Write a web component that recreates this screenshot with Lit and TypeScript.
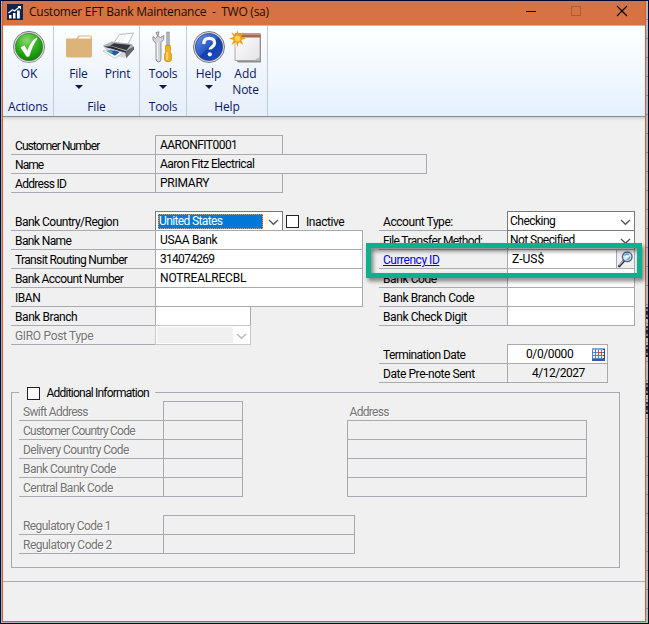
import { LitElement, html, css, svg, nothing } from "lit";
import { customElement } from "lit/decorators.js";

const text = (value: string, width: number, cls = "") =>
  html`<span class="t ${cls}" data-w=${width}>${value}</span>`;

type Row = {
  label: string;
  lw: number;
  value?: string;
  vw?: number;
  width: number;
  kind?: string;
  tail?: unknown;
  dim?: boolean;
  link?: boolean;
};

const chevron = html`<svg class="chev" width="11" height="7" viewBox="0 0 11 7"><path d="M1 1 5.5 5.3 10 1" fill="none" stroke="currentColor" stroke-width="1.2"/></svg>`;

const lens = html`<span class="lens"><svg width="17" height="18" viewBox="0 0 17 18">
  <path d="M2.300 16 6.800 10.800" stroke="#262b35" stroke-width="2.6" stroke-linecap="round"/>
  <path d="M2.200 15.300 6.300 10.600" stroke="#b9c3d0" stroke-width="1.100"/>
  <circle cx="10.200" cy="6.800" r="4.800" fill="#cfe9fb" stroke="#53647c" stroke-width="1.4"/>
  <path d="M7.500 5.600q2-2.600 4.400-1M9.500 9.600q3 0 3.300-3" stroke="#5aa4dc" fill="none" stroke-width="1.3"/>
  <path d="M8.500 6.600h2.400" stroke="#fff" stroke-width="1.6"/></svg></span>`;

const calendar = html`<svg class="cal" width="13" height="13" viewBox="0 0 13 13" shape-rendering="crispEdges">
  <rect width="13" height="13" fill="#5f80c4"/><rect width="13" height="2" fill="#7fa6de"/>
  <rect x="11" y="1" width="2" height="12" fill="#2e4a9a"/><rect y="11" width="13" height="2" fill="#3c58a6"/>
  ${[1, 4, 7, 10].map((x) => [2, 5, 8].map((y) => svg`<rect x=${x} y=${y} width="2" height="2" fill="#f1f6fe"/>`))}
  <rect x="6" y="4" width="4" height="4" fill="#e2481c"/><rect x="7" y="5" width="2" height="2" fill="#fff"/></svg>`;

const okIcon = html`<svg width="34" height="34" viewBox="0 0 34 34">
  <defs><radialGradient id="g" cx=".42" cy=".25" r=".85"><stop offset="0" stop-color="#8ad96b"/><stop offset=".5" stop-color="#2fae1c"/><stop offset="1" stop-color="#0a7307"/></radialGradient>
  <linearGradient id="r" x2="0" y2="1"><stop stop-color="#777"/><stop offset="1" stop-color="#9a9a9a"/></linearGradient></defs>
  <circle cx="17" cy="17" r="15.6" fill="#dcdcdc" stroke="url(#r)" stroke-width="1"/>
  <circle cx="17" cy="17" r="13.7" fill="url(#g)" stroke="#247a1c" stroke-width=".6"/>
  <path d="M8.6 17.4 12.4 15.2 15.4 20.6 C17.4 15 20.2 10.2 24.4 7.6 L25.6 8.4 C22 13 19.2 19.4 17.2 26.4 L14.6 26.8Z" fill="#fff"/></svg>`;

const folderIcon = html`<svg width="28" height="34" viewBox="0 0 28 34">
  <path d="M1 8.5h10.5l2-3H25q2 0 2 2V26q0 1.4-1.5 1.4h-23Q1 27.4 1 26Z" fill="#dcb479"/>
  <path d="M13 8.6 14.4 6.6H25.6V8.6Z" fill="#fff"/></svg>`;

const printIcon = html`<svg width="34" height="34" viewBox="0 0 34 34">
  <path d="M12 14 18.5 4.5 32.5 3 27 14Z" fill="#fdfdfe" stroke="#a5a9b0" stroke-width=".8"/>
  <path d="M17 12l4.5-6M20 12l4.5-6.500" stroke="#e3e6ea" stroke-width=".8"/>
  <path d="M2 15.5 11 11.500 31 14 33 18 25 26.500 8 23Z" fill="#aeb3b8"/>
  <path d="M9 15.600 13 13.300 29.500 15 25.500 20.200Z" fill="#34383d"/>
  <path d="M3 16.600 10 16.200 25 21.200 24.500 23.500Z" fill="#24282c"/>
  <path d="M25 21 33 16.400V19.500L25 28.500Z" fill="#62676d"/>
  <path d="M2 17 24 22.500V28L19 27Z" fill="#d6dadd"/>
  <path d="M2 21 9 18.500 22 22.500 14 28.500Z" fill="#f5f8fb" stroke="#9aa2ac" stroke-width=".5"/>
  <path d="M5 21 9.500 19.400 18.500 22 14 25.500Z" fill="#3f8ee0"/>
  <path d="M9 22.600 13.500 20.600 18.500 22 14 25.500Z" fill="#1d5a9f"/><path d="M7 21.500l3-.5 2 2-2 .6Z" fill="#64b45a"/></svg>`;

const toolsIcon = html`<svg width="22" height="34" viewBox="0 0 22 34">
  <path d="M4 2.500 7 1.800 6 6 8.500 7.500 11.800 5.500Q12.800 10 9 12.500V28.500Q9 32 6.500 32T4 28.500V13Q0 11 1 6.500L3.600 8.500 5.500 6Z" fill="#d3d5d8" stroke="#777b81" stroke-width=".8"/>
  <path d="M5.300 13V29" stroke="#fff" stroke-width="1"/>
  <path d="M14.700 2h2.600V15h-2.600Z" fill="#b4b8bd" stroke="#777" stroke-width=".5"/>
  <path d="M13.800 15.500h4.400l.4 4-.4 2 1.200 3V29.500q0 2.200-3.400 2.200t-3.400-2.200V24.500l1.200-3-.4-2Z" fill="#f4b21d" stroke="#bd7b0b" stroke-width=".7"/>
  <path d="M15 22V30" stroke="#ffe68a" stroke-width="1.300"/></svg>`;

const helpIcon = html`<svg width="34" height="34" viewBox="0 0 34 34">
  <defs><linearGradient id="b" x2="1" y2="1"><stop stop-color="#6f97ea"/><stop offset=".48" stop-color="#2a59c6"/><stop offset=".52" stop-color="#1441ae"/><stop offset="1" stop-color="#1c4cc0"/></linearGradient></defs>
  <circle cx="17" cy="17" r="15.500" fill="#dcdcdc" stroke="#7b7b7b" stroke-width="1"/>
  <circle cx="17" cy="17" r="13.600" fill="url(#b)" stroke="#173b91" stroke-width=".7"/>
  <path d="M11.800 14Q11.700 8.300 17.200 8.300T22.600 13Q22.600 15 20.300 16.700T18.200 19.600" fill="none" stroke="#f7f9fd" stroke-width="3.200"/>
  <circle cx="17.800" cy="24.300" r="2.100" fill="#f7f9fd"/></svg>`;

const noteIcon = html`<svg width="34" height="34" viewBox="0 0 34 34">
  <defs><linearGradient id="n" x2="1" y2="1"><stop stop-color="#fff"/><stop offset="1" stop-color="#e3e3e6"/></linearGradient></defs>
  <path d="M7 4.500H32V32.500H9L7 30Z" fill="#8d8d8d"/>
  <path d="M6 4H31V30.500H6Z" fill="url(#n)" stroke="#9a9a9a" stroke-width=".8"/>
  <path d="M6 3.500H31.400V7.500H6Z" fill="#a5694f"/><path d="M6 3.500H31.400V5H6Z" fill="#c39482"/>
  <path d="M25 30.500 31 27V30.500Z" fill="#b9b9b9"/>
  <path d="M8.500 0 10 5.200 14.300 2.200 12.300 7 17 8.500 12.300 10 14.300 15 10 11.900 8.500 17 7 11.900 2.500 15 4.700 10 0 8.500 4.700 7 2.500 2.200 7 5.200Z" fill="#f39a12"/>
  <circle cx="8.500" cy="8.500" r="3" fill="#ffd34d"/></svg>`;

const sheet = css`
  :host { display: block; width: 649px; height: 624px; box-sizing: border-box; overflow: hidden; position: relative;
    font-family: Roboto, "Liberation Sans", sans-serif; font-size: 12px; color: #000;
    background: #adb0b6; border: 1px solid #05072c; }
  * { box-sizing: border-box; }
  svg { display: block; flex: none; }
  .t { display: inline-block; white-space: pre; flex: none; }
  .frame { display: flex; }
  .win { width: 644px; height: 621px; margin-left: 1px; border: 1px solid #d2602c; border-top: 0; background: #f0f0f0; flex: none; }
  .edge { width: 2px; height: 621px; background:
    repeating-linear-gradient(#b6b7bb 0 18px, #85878e 18px 19px); }
  .edge i { display: block; width: 2px; height: 12px; background: repeating-linear-gradient(#30343c 0 2px, #7d8590 2px 4px, #20242c 4px 6px); margin-top: 7px; }
  .edge i:first-child { margin-top: 306px; }
  .edge i:nth-child(4) { margin-top: 26px; }
  .title { height: 24px; background: #d77342; display: flex; align-items: center; padding-left: 4px; color: #170d08;
    font: 12px/24px "Open Sans", "Noto Sans", sans-serif; }
  .title .t { margin-left: 6px; margin-top: -2px; }
  .title .app { margin-top: -3px; }
  .ctl { margin-left: auto; margin-top: -4px; }
  .ribbon { height: 92px; border-top: 1px solid #bcbcbc; border-bottom: 1px solid #898b90; display: flex;
    background: linear-gradient(#fff, #f2f9ff 50%, #e3f1fe);
    color: #0b1560; font: 12px/15px "Open Sans", "Noto Sans", sans-serif; }
  .shade { height: 4px; background: linear-gradient(#d4d4d6, #f0f0f0); }
  .group { border-right: 1px solid #c3cbd6; display: flex; flex-direction: column; align-items: center;
    background: linear-gradient(#fdfeff, #eff5fc 50%, #e6effa); }
  .btns { display: flex; height: 73px; padding-top: 4px; }
  .btn { display: flex; flex-direction: column; align-items: center; }
  .btn .t { margin-top: 2px; }
  .btn .t + .t { margin-top: 0.5px; }
  .drop { border: 4px solid transparent; border-top-color: #0b1560; border-bottom: 0; margin-top: 4px; }
  .w51 { width: 51px; } .w86 { width: 86px; } .w47 { width: 47px; } .w81 { width: 81px; }
  .w51 .btns { padding-left: 2px; }
  .w86 .btns { padding-left: 4px; }
  .w81 .btns { padding-left: 1px; }
  .w38 { width: 38px; } .w40 { width: 40px; } .w36 { width: 36px; }
  .body { height: 461px; padding: 14px 0 0 8px; border-bottom: 1px solid #a9aaaf; }
  .cols { display: flex; align-items: flex-start; margin-top: 18px; height: 172px; }
  .left { width: 368px; }
  .rows { padding-top: 1px; }
  .row { display: flex; height: 19px; position: relative; }
  .lab { border-bottom: 1px solid #a9aaaf; width: 144px; padding-left: 4px; line-height: 14px; padding-top: 3px; height: 19px; flex: none; white-space: nowrap; }
  .right .lab { width: 128px; }
  .val { height: 20px; margin-top: -1px; border: 1px solid #a9aaaf; padding-left: 4px; padding-top: 2px; line-height: 15px;
    display: flex; align-items: flex-start; flex: none; }
  .white { background: #fff; }
  .combo { background: #fff; border-color: #7a7a7d; position: relative; padding-left: 2px; }
  .chev { margin: 5px 3px 0 auto; color: #505050; }
  .combo.sel { padding: 2px 0 0 2px; }
  .pick { background: #0078d7; color: #fff; width: 105px; height: 15px; border: 1px dotted #f39b4a; line-height: 13px; }
  .off { border-color: #c8c8cb; padding: 1px 0 0 1px; }
  .off .blank { width: 76px; height: 16px; background: #f0f0f0; }
  .off .chev { color: #b5b5b5; margin-right: 3px; margin-top: 6px; }
  .dim { color: #737373; text-shadow: 1px 1px 0 #fff; }
  .link { color: #0000f0; text-decoration: underline; }
  .chk { width: 13px; height: 13px; border: 1px solid #222; background: #fff; flex: none; }
  .side { display: flex; padding-left: 3px; line-height: 14px; }
  .side .chk { margin-top: 3px; }
  .side .t { margin: 3px 0 0 7px; }
  .lens { margin: -2px 0 0 auto; border-left: 1px solid #a9aaaf; height: 18px; width: 18px; background: #f0f0f0; }
  .date { padding-left: 18px; }
  .cal { margin: 1px 2px 0 auto; }
  .sent { padding-left: 24px; }
  .gap { height: 18px; }
  .info { width: 609px; height: 176px; border: 1px solid #a9aaaf; position: relative; margin-top: 9px; padding: 8px 0 0 7px; }
  .legend { position: absolute; left: 7px; top: -9px; height: 18px; width: 136px; background: #f0f0f0; display: flex; align-items: center; padding-left: 8px; line-height: 18px; }
  .legend .t { margin-left: 6.5px; }
  .pair { display: flex; }
  .addr { margin-left: 104px; }
  .addr .cap { height: 19px; padding: 4px 0 0 2.5px; line-height: 14px; }
  .line { width: 240px; height: 20px; border: 1px solid #a9aaaf; margin-bottom: -1px; }
  .mark { position: absolute; left: 365px; top: 242px; width: 276px; height: 35px; border: 5px solid #0daf8d;
    filter: drop-shadow(2px 3px 2px rgba(0,0,0,.5)); }
`;

@customElement("app-root")
export class AppRoot extends LitElement {
  static styles = sheet;

  firstUpdated() {
    this.renderRoot.querySelectorAll<HTMLElement>("[data-w]").forEach((el) => {
      const n = (el.textContent ?? "").length;
      const gap = (Number(el.dataset.w) + 0.3 - el.getBoundingClientRect().width) / n;
      el.style.letterSpacing = `${gap.toFixed(3)}px`;
    });
  }

  row(r: Row) {
    const content =
      r.kind === "combo sel"
        ? html`<span class="pick">${text(r.value!, r.vw!)}</span>${chevron}`
        : r.kind === "combo off"
          ? html`<span class="blank"></span>${chevron}`
          : html`${r.value ? text(r.value, r.vw!) : nothing}${r.kind === "combo" ? chevron : nothing}${r.kind === "white look" ? lens : nothing}${r.kind === "white date" ? calendar : nothing}`;
    return html`<div class="row">
      <div class="lab">${text(r.label, r.lw, r.dim ? "dim" : r.link ? "link" : "")}</div>
      <div class="val ${r.kind ?? ""}" style="width:${r.width}px">${content}</div>${r.tail ?? nothing}
    </div>`;
  }

  rows(list: Row[]) {
    return html`<div class="rows">${list.map((r) => this.row(r))}</div>`;
  }

  render() {
    const drop = html`<i class="drop"></i>`;
    return html`<div class="frame"><div class="win">
        <div class="title">
          <svg class="app" width="16" height="16" viewBox="0 0 16 16"><rect width="16" height="16" fill="#0d2752"/>
            <path d="M2 11h2.500v3.500H2ZM6 9h2.500v5.500H6ZM10 6.500h2.800V14.500H10Z" fill="#fff"/><path d="M1.500 9 5.500 5.800 7.500 7 13 2.500" fill="none" stroke="#fff" stroke-width="1.200"/><path d="M10.500 2H14V5.500Z" fill="#fff"/></svg>
          ${text("Customer EFT Bank Maintenance  -  TWO (sa)", 239.5)}
          <svg class="ctl" width="119" height="12" viewBox="0 0 119 12" fill="none">
            <path d="M0 6.500H10" stroke="#000"/><rect x="45.500" y="1.500" width="9" height="9" stroke="#ae5a32"/>
            <path d="M91 1 101 11M101 1 91 11" stroke="#000" stroke-width="1.200"/></svg>
        </div>
        <div class="ribbon">
          <div class="group w51"><div class="btns"><div class="btn">${okIcon}${text("OK", 16)}</div></div>${text("Actions", 39.5)}</div>
          <div class="group w86"><div class="btns"><div class="btn w38">${folderIcon}${text("File", 18)}${drop}</div><div class="btn w40">${printIcon}${text("Print", 25)}</div></div>${text("File", 18)}</div>
          <div class="group w47"><div class="btns"><div class="btn">${toolsIcon}${text("Tools", 28)}${drop}</div></div>${text("Tools", 28)}</div>
          <div class="group w81"><div class="btns"><div class="btn w36">${helpIcon}${text("Help", 25)}${drop}</div><div class="btn w38">${noteIcon}${text("Add", 22)}${text("Note", 26)}</div></div>${text("Help", 25)}</div>
        </div>
        <div class="shade"></div>
        <div class="body">
          ${this.rows([
            { label: "Customer Number", lw: 84, value: "AARONFIT0001", vw: 77, width: 128 },
            { label: "Name", lw: 28, value: "Aaron Fitz Electrical", vw: 94, width: 272 },
            { label: "Address ID", lw: 51, value: "PRIMARY", vw: 49, width: 128 },
          ])}
          <div class="cols">
            <div class="left">${this.rows([
              { label: "Bank Country/Region", lw: 103, value: "United States", vw: 63, width: 128, kind: "combo sel",
                tail: html`<div class="side"><i class="chk"></i>${text("Inactive", 38)}</div>` },
              { label: "Bank Name", lw: 56, value: "USAA Bank", vw: 57, width: 208, kind: "white" },
              { label: "Transit Routing Number", lw: 112, value: "314074269", vw: 54, width: 208, kind: "white" },
              { label: "Bank Account Number", lw: 108, value: "NOTREALRECBL", vw: 86, width: 208, kind: "white" },
              { label: "IBAN", lw: 25, width: 208, kind: "white" },
              { label: "Bank Branch", lw: 62, width: 96, kind: "white" },
              { label: "GIRO Post Type", lw: 78, width: 96, kind: "combo off", dim: true },
            ])}</div>
            <div class="right">${this.rows([
              { label: "Account Type:", lw: 69.5, value: "Checking", vw: 45, width: 128, kind: "combo" },
              { label: "File Transfer Method:", lw: 99, value: "Not Specified", vw: 64, width: 128, kind: "combo" },
              { label: "Currency ID", lw: 56, value: "Z-US$", vw: 32, width: 128, kind: "white look", link: true },
              { label: "Bank Code", lw: 53.5, width: 128, kind: "white" },
              { label: "Bank Branch Code", lw: 91, width: 128, kind: "white" },
              { label: "Bank Check Digit", lw: 83.5, width: 128, kind: "white" },
            ])}<div class="gap"></div>${this.rows([
              { label: "Termination Date", lw: 82, value: "0/0/0000", vw: 47, width: 101, kind: "white date" },
              { label: "Date Pre-note Sent", lw: 91.5, value: "4/12/2027", vw: 52.5, width: 101, kind: "sent" },
            ])}</div>
          </div>
          <div class="info">
            <div class="legend"><i class="chk"></i>${text("Additional Information", 102)}</div>
            <div class="pair">
              ${this.rows([
                { label: "Swift Address", lw: 64.5, width: 80, dim: true },
                { label: "Customer Country Code", lw: 111.5, width: 80, dim: true },
                { label: "Delivery Country Code", lw: 105.5, width: 80, dim: true },
                { label: "Bank Country Code", lw: 92.5, width: 80, dim: true },
                { label: "Central Bank Code", lw: 89.5, width: 80, dim: true },
              ])}
              <div class="addr"><div class="cap">${text("Address", 39, "dim")}</div>${[0, 1, 2, 3].map(() => html`<div class="line"></div>`)}</div>
            </div>
            <div class="gap"></div>
            ${this.rows([
              { label: "Regulatory Code 1", lw: 87.5, width: 192, dim: true },
              { label: "Regulatory Code 2", lw: 88.5, width: 192, dim: true },
            ])}
          </div>
        </div>
      </div><div class="edge"><i></i><i></i><i></i><i></i><i></i></div></div>
      <div class="mark"></div>`;
  }
}
